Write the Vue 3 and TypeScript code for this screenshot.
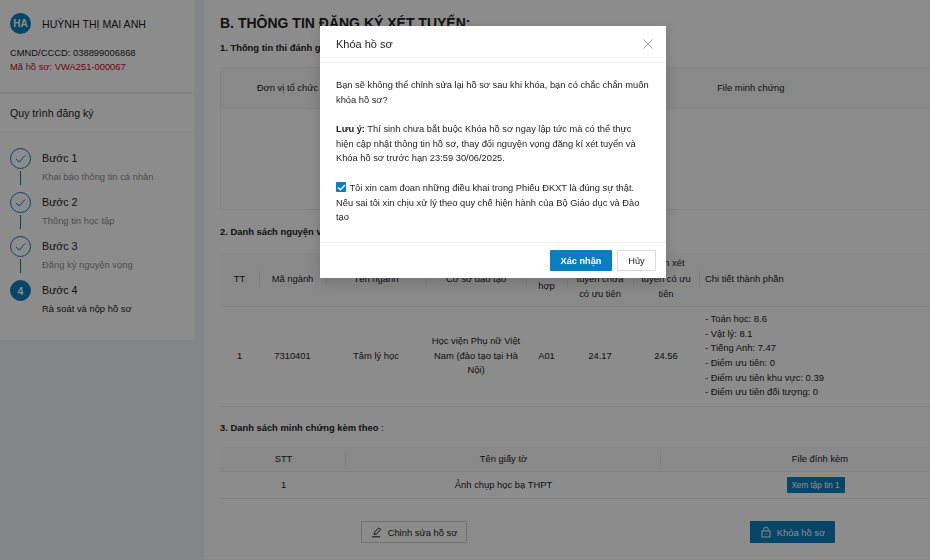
<template>
  <div class="page">
    <aside class="sidebar">
      <section class="profile">
        <div class="user">
          <span class="avatar">HA</span>
          <span class="name">HUỲNH THỊ MAI ANH</span>
        </div>
        <p class="id">CMND/CCCD: 038899006868</p>
        <p class="code">Mã hồ sơ: VWA251-000067</p>
      </section>
      <section class="process">
        <h3 class="process-title">Quy trình đăng ký</h3>
        <ul class="steps">
          <li v-for="(step, i) in steps" :key="step.title" class="step" :class="{ current: i === steps.length - 1 }">
            <div class="marker">
              <span class="dot">
                <template v-if="i === steps.length - 1">{{ i + 1 }}</template>
                <svg v-else width="13" height="13" viewBox="0 0 13 13" fill="none" stroke="currentColor" stroke-width="1">
                  <path d="M2 7l3.2 3L11 3.5" />
                </svg>
              </span>
              <span v-if="i < steps.length - 1" class="connector"></span>
            </div>
            <div class="step-text">
              <div class="step-title">{{ step.title }}</div>
              <div class="step-sub">{{ step.sub }}</div>
            </div>
          </li>
        </ul>
      </section>
    </aside>

    <main class="main">
      <div class="content">
        <h2 class="heading">B. THÔNG TIN ĐĂNG KÝ XÉT TUYỂN:</h2>

        <h4 class="sub first">1. Thông tin thi đánh giá năng lực, đánh giá tư duy:</h4>
        <table class="table bordered">
          <colgroup><col style="width: 146px" /><col style="width: 158px" /><col /></colgroup>
          <thead>
            <tr class="tall">
              <th>Đơn vị tổ chức thi</th>
              <th>Điểm thi</th>
              <th>File minh chứng</th>
            </tr>
          </thead>
          <tbody>
            <tr class="empty"><td colspan="3"></td></tr>
          </tbody>
        </table>

        <h4 class="sub second">2. Danh sách nguyện vọng đăng ký xét tuyển:</h4>
        <table class="table wishes">
          <colgroup>
            <col style="width: 39px" /><col style="width: 67px" /><col style="width: 100px" /><col style="width: 100px" />
            <col style="width: 41px" /><col style="width: 66px" /><col style="width: 66px" /><col />
          </colgroup>
          <thead>
            <tr>
              <th>TT</th>
              <th>Mã ngành</th>
              <th>Tên ngành</th>
              <th>Cơ sở đào tạo</th>
              <th class="narrow">Tổ hợp</th>
              <th>Điểm xét tuyển chưa có ưu tiên</th>
              <th>Điểm xét tuyển có ưu tiên</th>
              <th class="left">Chi tiết thành phần</th>
            </tr>
          </thead>
          <tbody>
            <tr>
              <td>1</td>
              <td>7310401</td>
              <td>Tâm lý học</td>
              <td>Học viện Phụ nữ Việt Nam (đào tạo tại Hà Nội)</td>
              <td>A01</td>
              <td>24.17</td>
              <td>24.56</td>
              <td class="left">
                <div v-for="line in scores" :key="line">{{ line }}</div>
              </td>
            </tr>
          </tbody>
        </table>

        <h4 class="sub third">3. Danh sách minh chứng kèm theo<span class="thin"> :</span></h4>
        <table class="table files">
          <colgroup><col style="width: 125px" /><col style="width: 315px" /><col /></colgroup>
          <thead>
            <tr>
              <th>STT</th>
              <th>Tên giấy tờ</th>
              <th>File đính kèm</th>
            </tr>
          </thead>
          <tbody>
            <tr>
              <td>1</td>
              <td>Ảnh chụp học bạ THPT</td>
              <td><button class="file-btn">Xem tập tin 1</button></td>
            </tr>
          </tbody>
        </table>

        <div class="actions">
          <button class="btn outline">
            <svg width="12" height="12" viewBox="0 0 12 12" fill="none" stroke="currentColor" stroke-width="1">
              <path d="M3 8.4l.5-2.2L8 1.8l1.8 1.8-4.5 4.4z" />
              <path d="M.8 10.8h8.4" />
            </svg>
            Chỉnh sửa hồ sơ
          </button>
          <button class="btn solid">
            <svg width="12" height="12" viewBox="0 0 12 12" fill="none" stroke="currentColor" stroke-width="1">
              <rect x="2" y="5" width="8" height="6" />
              <path d="M3.8 5V3.2a2.2 2.2 0 0 1 4.4 0V5" />
              <path d="M6 7.4v1.2" />
            </svg>
            Khóa hồ sơ
          </button>
        </div>
      </div>
    </main>

    <div class="overlay">
      <div class="modal">
        <header class="modal-head">
          <span>Khóa hồ sơ</span>
          <svg class="close" width="10" height="10" viewBox="0 0 10 10" stroke="currentColor" stroke-width="0.8">
            <path d="M.5.5l9 9M9.5.5l-9 9" />
          </svg>
        </header>
        <div class="modal-body">
          <p>Bạn sẽ không thể chỉnh sửa lại hồ sơ sau khi khóa, bạn có chắc chắn muốn khóa hồ sơ?</p>
          <p><b>Lưu ý:</b> Thí sinh chưa bắt buộc Khóa hồ sơ ngay lập tức mà có thể thực hiện cập nhật thông tin hồ sơ, thay đổi nguyện vọng đăng kí xét tuyển và Khóa hồ sơ trước hạn 23:59 30/06/2025.</p>
          <p>
            <span class="check">
              <svg width="9" height="9" viewBox="0 0 9 9" fill="none" stroke="#fff" stroke-width="1.4">
                <path d="M1 4.5l2.4 2.3L8 2" />
              </svg>
            </span>
            Tôi xin cam đoan những điều khai trong Phiếu ĐKXT là đúng sự thật. Nếu sai tôi xin chịu xử lý theo quy chế hiện hành của Bộ Giáo dục và Đào tạo
          </p>
        </div>
        <footer class="modal-foot">
          <button class="foot-btn ok">Xác nhận</button>
          <button class="foot-btn cancel">Hủy</button>
        </footer>
      </div>
    </div>
  </div>
</template>

<script setup lang="ts">
interface Step {
  title: string
  sub: string
}

const steps: Step[] = [
  { title: 'Bước 1', sub: 'Khai báo thông tin cá nhân' },
  { title: 'Bước 2', sub: 'Thông tin học tập' },
  { title: 'Bước 3', sub: 'Đăng ký nguyện vọng' },
  { title: 'Bước 4', sub: 'Rà soát và nộp hồ sơ' },
]

const scores = [
  '- Toán học: 8.6',
  '- Vật lý: 8.1',
  '- Tiếng Anh: 7.47',
  '- Điểm ưu tiên: 0',
  '- Điểm ưu tiên khu vực: 0.39',
  '- Điểm ưu tiên đối tượng: 0',
]
</script>

<style>
html,
body {
  margin: 0;
  overflow: hidden;
}
</style>

<style scoped>
.page {
  display: flex;
  gap: 10px;
  height: 560px;
  width: 930px;
  overflow: hidden;
  background: #f0f3f7;
  color: #222;
  font-family: 'Liberation Sans', Arial, sans-serif;
  font-size: 9.4px;
}

.sidebar {
  flex: 0 0 194px;
  align-self: flex-start;
  height: 340px;
  background: #fff;
}

.profile {
  height: 79px;
  padding: 13px 10px 0;
  border-bottom: 2px solid #eceef1;
}

.user {
  display: flex;
  align-items: center;
  gap: 11px;
  margin-bottom: 12px;
}

.avatar {
  display: flex;
  align-items: center;
  justify-content: center;
  width: 21px;
  height: 21px;
  border-radius: 50%;
  background: #0a7fbd;
  color: #fff;
  font-size: 10px;
  font-weight: 700;
}

.name {
  font-size: 10.6px;
}

.id,
.code {
  margin: 0;
  line-height: 14px;
  font-size: 9.4px;
}

.code {
  color: #d0021b;
}

.process-title {
  margin: 0;
  height: 38px;
  line-height: 38px;
  padding-left: 10px;
  border-bottom: 1px solid #eceef1;
  font-size: 10.6px;
  font-weight: 400;
}

.steps {
  list-style: none;
  margin: 0;
  padding: 15px 0 0 10px;
}

.step {
  display: flex;
  gap: 11px;
  height: 44px;
}

.marker {
  display: flex;
  flex-direction: column;
  align-items: center;
  width: 21px;
}

.dot {
  display: flex;
  align-items: center;
  justify-content: center;
  box-sizing: border-box;
  width: 21px;
  height: 21px;
  border: 1px solid #0a7fbd;
  border-radius: 50%;
  color: #0a7fbd;
  font-size: 10.5px;
  font-weight: 700;
}

.current .dot {
  background: #0a7fbd;
  color: #fff;
}

.connector {
  width: 1px;
  height: 14px;
  margin-top: 2px;
  background: #0a7fbd;
}

.step-title {
  font-size: 10.7px;
  line-height: 15px;
  margin-top: 3px;
}

.step-sub {
  margin-top: 5px;
  font-size: 9.4px;
  line-height: 12px;
  color: #8f8f8f;
}

.current .step-sub {
  color: #222;
}

.main {
  flex: 1;
  min-width: 0;
  overflow: hidden;
  height: 559px;
  background: #fff;
}

.content {
  width: 758px;
  padding: 14px 0 0 16px;
}

.heading {
  margin: 0;
  font-size: 14px;
  line-height: 18px;
}

.sub {
  margin: 0;
  font-size: 9.4px;
  line-height: 14px;
}

.sub.first {
  margin-top: 9px;
  margin-bottom: 12px;
}

.sub.second {
  margin-top: 15px;
  margin-bottom: 14px;
}

.sub.third {
  margin-top: 14px;
  margin-bottom: 12px;
}

.thin {
  font-weight: 400;
}

.table {
  width: 758px;
  table-layout: fixed;
  border-collapse: collapse;
  font-size: 9.4px;
}

.table th {
  position: relative;
  padding: 0 5px;
  background: #fafafa;
  font-weight: 400;
  line-height: 15.5px;
  text-align: center;
  border-bottom: 1px solid #eeeeee;
}

.table th + th::before {
  content: '';
  position: absolute;
  left: 0;
  top: 50%;
  width: 1px;
  height: 16px;
  margin-top: -8px;
  background: #e8e8e8;
}

.table td {
  padding: 0 5px;
  line-height: 14.6px;
  text-align: center;
  border-bottom: 1px solid #e8e8e8;
}

.table .left {
  text-align: left;
  padding-left: 6px;
}

.bordered {
  border: 1px solid #eeeeee;
}

.bordered th + th::before {
  display: none;
}

.tall th {
  height: 40px;
}

.empty td {
  height: 100px;
  border-bottom: 0;
}

.wishes thead tr {
  height: 53px;
}

.wishes th {
  padding-bottom: 2px;
}

.wishes th.narrow {
  padding-left: 10px;
  padding-right: 10px;
}

.wishes tbody tr {
  height: 100px;
}

.files thead tr {
  height: 25px;
}

.files tbody tr {
  height: 27px;
}

.files th,
.files td {
  padding: 0 3px 0 5px;
}

.file-btn {
  width: 58px;
  height: 16px;
  padding: 0;
  margin-right: 9px;
  border: 0;
  border-radius: 1px;
  background: #0a7fbd;
  color: #fff;
  font: 8.2px 'Liberation Sans', Arial, sans-serif;
}

.actions {
  display: flex;
  gap: 283px;
  padding: 22px 0 0 141px;
}

.btn {
  display: flex;
  align-items: center;
  justify-content: center;
  gap: 5px;
  height: 22px;
  padding: 0;
  border-radius: 1px;
  font: 9.4px 'Liberation Sans', Arial, sans-serif;
}

.btn.outline {
  width: 106px;
  border: 1px solid #cfcfcf;
  background: #fff;
  color: #222;
}

.btn.solid {
  width: 85px;
  border: 0;
  background: #0a7fbd;
  color: #fff;
}

.overlay {
  position: fixed;
  inset: 0;
  background: rgba(0, 0, 0, 0.45);
}

.modal {
  position: absolute;
  left: 320px;
  top: 26px;
  display: flex;
  flex-direction: column;
  width: 346px;
  height: 252px;
  background: #fff;
  box-shadow: 0 4px 14px rgba(0, 0, 0, 0.18);
}

.modal-head {
  display: flex;
  align-items: center;
  justify-content: space-between;
  flex: 0 0 36px;
  padding: 0 13px 0 16px;
  border-bottom: 1px solid #eeeeee;
  font-size: 11px;
}

.close {
  color: #888;
}

.modal-body {
  flex: 1;
  padding: 15px 16px 0;
  line-height: 14.6px;
  font-size: 9.3px;
}

.modal-body p {
  margin: 0 0 15px;
}

.check {
  display: inline-flex;
  align-items: center;
  justify-content: center;
  width: 10px;
  height: 10px;
  margin-right: 1px;
  vertical-align: -1px;
  border-radius: 1px;
  background: #0a7fbd;
}

.modal-foot {
  display: flex;
  justify-content: flex-end;
  gap: 5px;
  flex: 0 0 36px;
  box-sizing: border-box;
  padding: 7px 10px 0;
  border-top: 1px solid #eeeeee;
}

.foot-btn {
  height: 21px;
  padding: 0;
  border-radius: 1px;
  font: 9.2px 'Liberation Sans', Arial, sans-serif;
}

.ok {
  width: 62px;
  border: 0;
  background: #0a7fbd;
  color: #fff;
  font-weight: 700;
}

.cancel {
  width: 39px;
  border: 1px solid #d9d9d9;
  background: #fff;
  color: #222;
}
</style>
